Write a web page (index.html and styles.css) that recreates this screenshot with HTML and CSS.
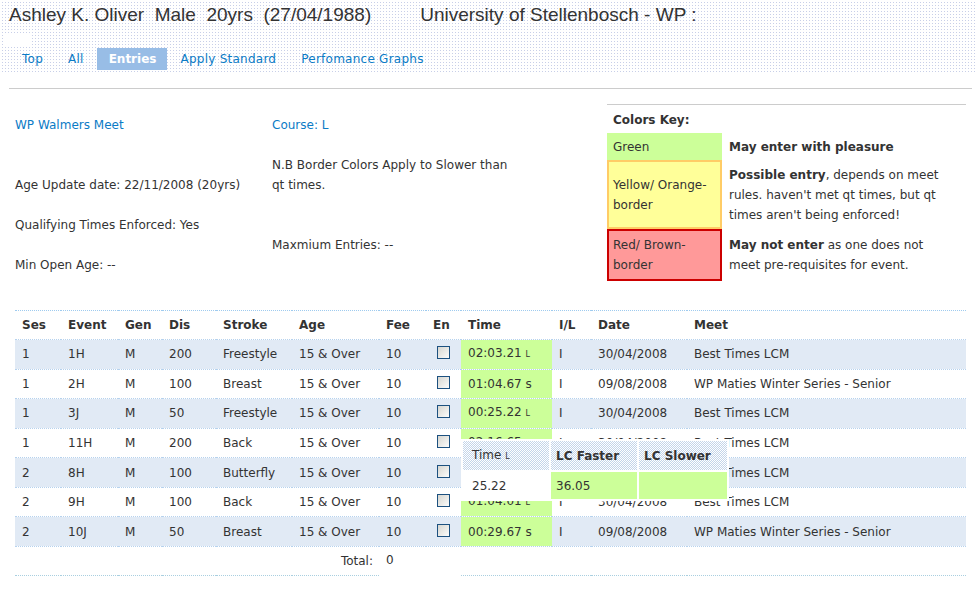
FILE: index.html
```html
<!DOCTYPE html>
<html>
<head>
<meta charset="utf-8">
<title>Entries</title>
<link rel="stylesheet" href="styles.css">
</head>
<body>
<header class="top">
  <h1 class="title"><span>Ashley K. Oliver&nbsp; Male&nbsp; 20yrs&nbsp; (27/04/1988)</span><span class="club">University of Stellenbosch - WP :</span></h1>
  <div class="blank"></div>
  <nav class="tabs">
    <a class="tab" href="#">Top</a>
    <a class="tab" href="#">All</a>
    <a class="tab active" href="#">Entries</a>
    <a class="tab" href="#">Apply Standard</a>
    <a class="tab" href="#">Perfomance Graphs</a>
  </nav>
</header>
<hr class="rule">
<section class="info">
  <div class="col col-meet">
    <a class="link" href="#">WP Walmers Meet</a><br><br><br>
    Age Update date: 22/11/2008 (20yrs)<br><br>
    Qualifying Times Enforced: Yes<br><br>
    Min Open Age: --
  </div>
  <div class="col col-course">
    <a class="link" href="#">Course: L</a><br><br>
    N.B Border Colors Apply to Slower than<br>qt times.<br><br><br>
    Maxmium Entries: --
  </div>
  <div class="key">
    <div class="key-title">Colors Key:</div>
    <div class="key-row">
      <div class="swatch sw-green">Green</div>
      <div class="desc"><b>May enter with pleasure</b></div>
    </div>
    <div class="key-row">
      <div class="swatch sw-yellow">Yellow/ Orange-<br>border</div>
      <div class="desc"><b>Possible entry</b>, depends on meet<br>rules. haven't met qt times, but qt<br>times aren't being enforced!</div>
    </div>
    <div class="key-row">
      <div class="swatch sw-red">Red/ Brown-<br>border</div>
      <div class="desc"><b>May not enter</b> as one does not<br>meet pre-requisites for event.</div>
    </div>
  </div>
</section>

<table class="entries">
  <colgroup>
    <col style="width:46px"><col style="width:57px"><col style="width:44px"><col style="width:54px">
    <col style="width:76px"><col style="width:87px"><col style="width:47px"><col style="width:35px">
    <col style="width:91px"><col style="width:39px"><col style="width:96px"><col style="width:279px">
  </colgroup>
  <thead>
    <tr><th>Ses</th><th>Event</th><th>Gen</th><th>Dis</th><th>Stroke</th><th>Age</th><th>Fee</th><th>En</th><th>Time</th><th>I/L</th><th>Date</th><th>Meet</th></tr>
  </thead>
  <tbody>
    <tr class="alt"><td>1</td><td>1H</td><td>M</td><td>200</td><td>Freestyle</td><td>15 &amp; Over</td><td>10</td><td class="en"><span class="box"></span></td><td class="time">02:03.21 <span class="unit">L</span></td><td>I</td><td>30/04/2008</td><td>Best Times LCM</td></tr>
    <tr><td>1</td><td>2H</td><td>M</td><td>100</td><td>Breast</td><td>15 &amp; Over</td><td>10</td><td class="en"><span class="box"></span></td><td class="time">01:04.67 s</td><td>I</td><td>09/08/2008</td><td>WP Maties Winter Series - Senior</td></tr>
    <tr class="alt"><td>1</td><td>3J</td><td>M</td><td>50</td><td>Freestyle</td><td>15 &amp; Over</td><td>10</td><td class="en"><span class="box"></span></td><td class="time">00:25.22 <span class="unit">L</span></td><td>I</td><td>30/04/2008</td><td>Best Times LCM</td></tr>
    <tr><td>1</td><td>11H</td><td>M</td><td>200</td><td>Back</td><td>15 &amp; Over</td><td>10</td><td class="en"><span class="box"></span></td><td class="time">02:16.65 <span class="unit">L</span></td><td>I</td><td>30/04/2008</td><td>Best Times LCM</td></tr>
    <tr class="alt"><td>2</td><td>8H</td><td>M</td><td>100</td><td>Butterfly</td><td>15 &amp; Over</td><td>10</td><td class="en"><span class="box"></span></td><td class="time">00:59.88 <span class="unit">L</span></td><td>I</td><td>30/04/2008</td><td>Best Times LCM</td></tr>
    <tr><td>2</td><td>9H</td><td>M</td><td>100</td><td>Back</td><td>15 &amp; Over</td><td>10</td><td class="en"><span class="box"></span></td><td class="time">01:04.01 <span class="unit">L</span></td><td>I</td><td>30/04/2008</td><td>Best Times LCM</td></tr>
    <tr class="alt"><td>2</td><td>10J</td><td>M</td><td>50</td><td>Breast</td><td>15 &amp; Over</td><td>10</td><td class="en"><span class="box"></span></td><td class="time">00:29.67 s</td><td>I</td><td>09/08/2008</td><td>WP Maties Winter Series - Senior</td></tr>
    <tr class="total"><td colspan="6" class="total-label">Total:</td><td class="total-num">0</td><td></td><td colspan="4" class="line"></td></tr>
  </tbody>
</table>

<div class="tip">
  <table>
    <tr><th class="c1">Time <span class="unit">L</span></th><th class="c2 b">LC Faster</th><th class="c3 b">LC Slower</th></tr>
    <tr><td class="c1">25.22</td><td class="c2 g">36.05</td><td class="c3 g"></td></tr>
  </table>
</div>
</body>
</html>
```
FILE: styles.css
```css
* { box-sizing: border-box; }
html, body { margin: 0; padding: 0; background: #fff; }
body {
  width: 976px;
  position: relative;
  font-family: "DejaVu Sans", Verdana, sans-serif;
  font-size: 12px;
  line-height: 20px;
  color: #333;
}
a { text-decoration: none; }

.top {
  height: 73px;
  padding: 3px 0 0 9px;
  background:
    linear-gradient(to right, rgba(255,255,255,1) 2px, rgba(255,255,255,0) 2px) 0 0 / 3px 3px,
    linear-gradient(to bottom, #fff 2px, #c8cfe8 2px) 0 0 / 3px 3px;
}
.title {
  margin: 0;
  display: flex;
  font: normal 19px/24px "Liberation Sans", Arial, sans-serif;
  color: #333;
  white-space: nowrap;
}
.title .club { margin-left: 49px; }
.blank { width: 27px; height: 13px; background: #fff; margin: 6px 0 0 -6px; }
.tabs { display: flex; margin-top: 2px; padding-left: 1px; }
.tab { padding: 0 12px; margin-right: 1px; line-height: 22px; color: #0b7bc6; letter-spacing: 0.25px; }
.tab.active { background: #98bde6; color: #fff; font-weight: bold; padding: 0 11px 0 12px; letter-spacing: 0; }

.rule { margin: 15px 4px 0 9px; border: 0; border-top: 1px solid #ccc; height: 0; }

.info { display: flex; margin-top: 15px; padding-left: 15px; }
.col { padding-top: 11px; }
.col-meet { width: 257px; }
.col-course { width: 335px; }
.link { color: #0b7bc6; }
.key { width: 359px; border-top: 1px solid #ccc; padding-top: 5px; }
.key-title { font-weight: bold; padding-left: 6px; margin-bottom: 3px; }
.key-row { display: flex; align-items: center; }
.swatch { width: 115px; flex: none; display: flex; align-items: center; padding: 0 4px; white-space: nowrap; }
.sw-green { background: #ccff99; height: 27px; padding-left: 6px; }
.sw-yellow { background: #ffff99; border: 2px solid #ffcc66; height: 69px; }
.sw-red { background: #ff9999; border: 2px solid #cc0000; height: 52px; }
.desc { padding-left: 7px; white-space: nowrap; }

.entries {
  margin: 29px 0 0 15px;
  width: 951px;
  table-layout: fixed;
  border-collapse: collapse;
}
.entries th, .entries td {
  padding: 0 0 0 7px;
  text-align: left;
  white-space: nowrap;
  overflow: hidden;
  vertical-align: middle;
}
.entries thead tr { border-top: 1px dotted #9fcbef; }
.entries thead th { height: 29px; font-weight: bold; }
.entries tbody td { height: 29.57px; }
.entries tbody tr.alt td {
  background: repeating-conic-gradient(#c3d5ea 0 25%, #fff 0 50%) 0 0 / 2px 2px;
  border-top: 1px dotted #b6d2ee;
  border-bottom: 1px dotted #b6d2ee;
}
.entries tbody tr td.time { background: #ccff99; }
.unit { font-size: 8px; }
.box {
  display: inline-block;
  width: 13px;
  height: 13px;
  margin-left: 4px;
  vertical-align: -1px;
  border: 1px solid #1c5180;
  background: linear-gradient(135deg, #d6d6d0, #fcfcfb);
}
.entries .total td { height: 29px; }
.entries .total-label { text-align: right; padding-right: 6px; }
.entries .total-num { vertical-align: top; padding-top: 3px; }
.entries .total-label, .entries .line { border-bottom: 1px dotted #a9cfe0; }

.tip {
  position: absolute;
  left: 461px;
  top: 439px;
  background: #fff;
}
.tip table { border-spacing: 2px; }
.tip th, .tip td { padding: 0; text-align: left; font-weight: normal; }
.tip th {
  height: 29px;
  background: repeating-conic-gradient(#c3d5ea 0 25%, #fff 0 50%) 0 0 / 2px 2px;
}
.tip td { height: 27px; }
.tip .b { font-weight: bold; }
.tip .g { background: #ccff99; }
.tip .c1 { width: 86px; padding-left: 9px; }
.tip .c2 { width: 86px; padding-left: 5px; }
.tip .c3 { width: 88px; padding-left: 5px; }
```
